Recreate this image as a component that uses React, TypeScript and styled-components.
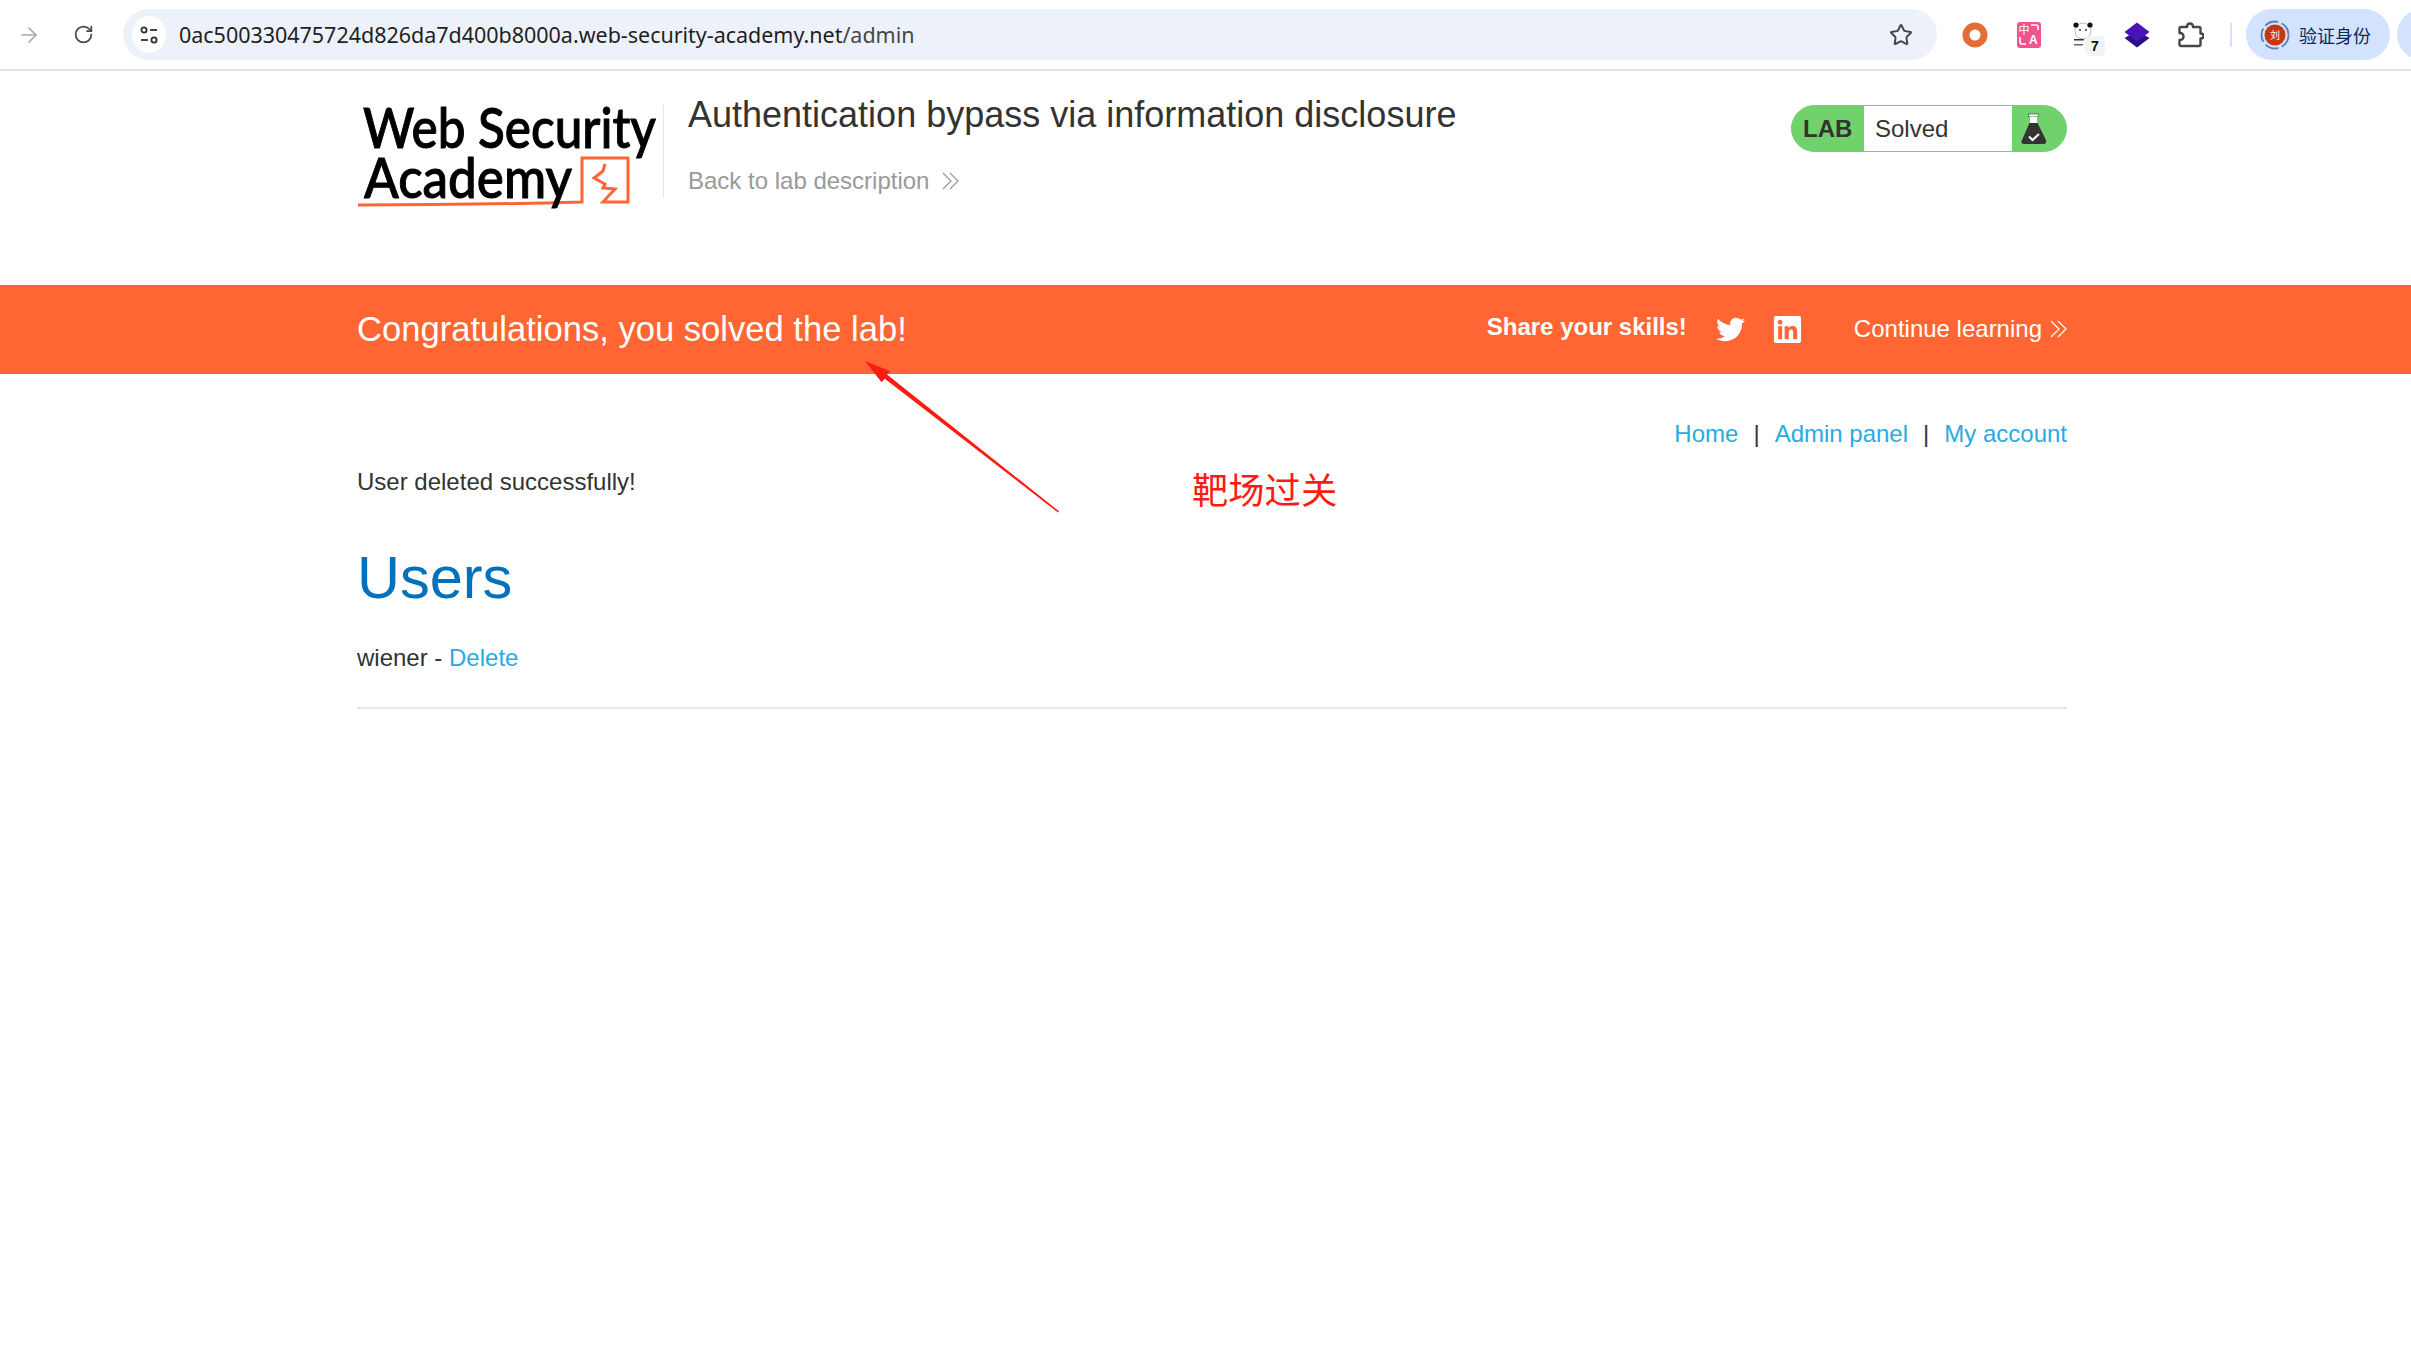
import React from "react";
import styled, { createGlobalStyle } from "styled-components";
import { ArrowRight, RotateCw, Star } from "lucide-react";
import { FaTwitter, FaLinkedin } from "react-icons/fa";

const Global = createGlobalStyle`
  html, body { margin: 0; padding: 0; background: #fff; }
  body { font-family: "Liberation Sans", Arial, sans-serif; color: #333332; }
  * { box-sizing: border-box; }
  a { text-decoration: none; }
`;

const Page = styled.div`
  position: relative;
  width: 2411px;
  height: 1368px;
  overflow: hidden;
  background: #fff;
`;

const BrowserBar = styled.div`
  height: 71px;
  border-bottom: 2px solid #e3e3e3;
  display: flex;
  align-items: flex-start;
  padding-top: 9px;
`;

const NavIcon = styled.div<{ $w: number; $c: string; $pad?: number }>`
  width: ${(p) => p.$w}px;
  height: 51px;
  padding-left: ${(p) => p.$pad ?? 0}px;
  display: flex;
  align-items: center;
  justify-content: center;
  color: ${(p) => p.$c};
  flex: none;
`;

const Omnibox = styled.div`
  width: 1814px;
  margin-left: 13px;
  height: 51px;
  background: #edf2fa;
  border-radius: 26px;
  display: flex;
  align-items: center;
  padding: 0 14px 0 9px;
  flex: none;
`;

const TuneBadge = styled.div`
  width: 34px;
  height: 37px;
  border-radius: 50%;
  background: #fff;
  display: flex;
  align-items: center;
  justify-content: center;
  flex: none;
`;

const Url = styled.div`
  margin-left: 13px;
  font-family: "Noto Sans", sans-serif;
  font-size: 21.5px;
  letter-spacing: -0.02px;
  color: #1f1f1f;
  white-space: nowrap;
  flex: 1;
  span { color: #474747; }
`;

const StarSlot = styled.div`
  width: 44px;
  height: 44px;
  display: flex;
  align-items: center;
  justify-content: center;
  color: #474747;
`;

const ExtRow = styled.div`
  display: flex;
  align-items: center;
  height: 51px;
  margin-left: 11px;
`;

const ExtSlot = styled.div`
  position: relative;
  width: 54px;
  height: 51px;
  display: flex;
  align-items: center;
  justify-content: center;
  flex: none;
`;

const ExtBadge = styled.div`
  position: absolute;
  left: 29px;
  top: 27px;
  width: 20px;
  height: 20px;
  border-radius: 5px;
  background: #f1f3f4;
  font: bold 14px "Liberation Sans", sans-serif;
  color: #111;
  display: flex;
  align-items: center;
  justify-content: center;
`;

const BarDivider = styled.div`
  width: 2px;
  height: 24px;
  background: #d3e3fd;
  margin: 0 14px 0 12px;
  flex: none;
`;

const ProfilePill = styled.div`
  width: 144px;
  height: 51px;
  border-radius: 26px;
  background: #d3e3fd;
  display: flex;
  align-items: center;
  padding-left: 14px;
  gap: 9px;
  flex: none;
`;

const ProfileName = styled.span`
  font-family: "Noto Sans CJK SC", sans-serif;
  font-size: 18px;
  color: #0a2a5c;
  white-space: nowrap;
`;

const NextPill = styled.div`
  width: 60px;
  height: 51px;
  margin-left: 7px;
  border-radius: 26px 0 0 26px;
  background: #d3e3fd;
  flex: none;
`;

const Shell = styled.div`
  width: 1710px;
  margin-left: 357px;
`;

const Header = styled(Shell)`
  height: 214px;
  display: flex;
  align-items: flex-start;
  padding-top: 20px;
`;

const LogoBox = styled.div`
  width: 307px;
  height: 93px;
  margin-top: 14px;
  border-right: 1px solid #e6e6e6;
  flex: none;
  svg { display: block; overflow: visible; }
`;

const TitleBlock = styled.div`
  margin-left: 24px;
`;

const LabTitle = styled.h2`
  margin: 2px 0 0;
  font-size: 36px;
  line-height: 44px;
  font-weight: 400;
  color: #333332;
`;

const BackLink = styled.a`
  margin-top: 29px;
  display: flex;
  align-items: center;
  gap: 13px;
  font-size: 24px;
  line-height: 30px;
  color: #999;
`;

const Status = styled.div`
  margin-left: auto;
  margin-top: 14px;
  width: 276px;
  height: 47px;
  border-radius: 24px;
  background: #70d16d;
  border: 1px solid #70d16d;
  display: flex;
  align-items: stretch;
  flex: none;
  overflow: hidden;
`;

const StatusLab = styled.div`
  width: 72px;
  padding-left: 11px;
  font-size: 24px;
  font-weight: 700;
  line-height: 45px;
  color: #333332;
`;

const StatusText = styled.div`
  width: 148px;
  background: #fff;
  padding-left: 11px;
  font-size: 24px;
  line-height: 45px;
  color: #333332;
`;

const StatusIcon = styled.div`
  flex: 1;
  display: flex;
  align-items: flex-start;
  padding: 7px 0 0 9px;
`;

const Banner = styled.div`
  height: 89px;
  background: #ff6633;
  color: #fff;
`;

const BannerInner = styled(Shell)`
  height: 100%;
  display: flex;
  align-items: center;
`;

const Congrats = styled.h4`
  margin: -1px 0 0;
  font-size: 34.6px;
  font-weight: 400;
  line-height: 40px;
  flex: 1;
`;

const Share = styled.span`
  font-size: 24px;
  font-weight: 700;
  margin-top: -5px;
  margin-right: 29px;
`;

const Social = styled.a<{ $gap: number }>`
  color: #fff;
  display: flex;
  margin-right: ${(p) => p.$gap}px;
`;

const Continue = styled.a`
  display: flex;
  align-items: center;
  gap: 8px;
  color: #fff;
  font-size: 24px;
  margin-top: -1px;
`;

const Content = styled(Shell)`
  padding-top: 45px;
`;

const TopLinks = styled.nav`
  display: flex;
  justify-content: flex-end;
  font-size: 24px;
  line-height: 30px;
`;

const NavLink = styled.a`
  color: #29abe2;
`;

const Pipe = styled.span`
  margin: 0 15px;
  color: #333332;
`;

const Body = styled.p<{ $mt: number }>`
  margin: ${(p) => p.$mt}px 0 0;
  font-size: 24px;
  line-height: 30px;
  color: #333332;
`;

const Heading = styled.h1`
  margin: 46px 0 0;
  font-size: 59.5px;
  line-height: 70px;
  font-weight: 400;
  color: #0071bc;
`;

const Rule = styled.hr`
  margin: 34px 0 0;
  border: 0;
  height: 2px;
  background: #e6e6e6;
`;

const ArrowMark = styled.svg`
  position: absolute;
  left: 860px;
  top: 355px;
`;

const Note = styled.div`
  position: absolute;
  left: 1192px;
  top: 465px;
  font-family: "Noto Sans CJK SC", sans-serif;
  font-size: 36.3px;
  line-height: 46px;
  color: #ff1a12;
  white-space: nowrap;
`;

const Chevrons = ({ c, w = 17, h = 18 }: { c: string; w?: number; h?: number }) => (
  <svg width={w} height={h} viewBox="0 0 17 18" fill="none" stroke={c} strokeWidth="1.2">
    <polyline points="1,1 9,9 1,17" />
    <polyline points="8,1 16,9 8,17" />
  </svg>
);

const Tune = () => (
  <svg width="20" height="22" viewBox="0 0 20 22" fill="none" stroke="#303030" strokeWidth="1.8">
    <circle cx="5" cy="6" r="2.6" />
    <line x1="11" y1="6" x2="18" y2="6" />
    <circle cx="15" cy="16" r="2.6" />
    <line x1="2" y1="16" x2="9" y2="16" />
  </svg>
);

const Translate = () => (
  <svg width="24" height="26" viewBox="0 0 24 26">
    <rect width="24" height="26" rx="3" fill="#ef5490" />
    <text x="1.5" y="12" fontSize="11" fill="#fff" fontFamily="Noto Sans CJK SC, sans-serif">中</text>
    <text x="12" y="22" fontSize="12" fontWeight="700" fill="#fff" fontFamily="Liberation Sans, sans-serif">A</text>
    <path d="M3 15v5a2 2 0 0 0 2 2h4M14 3h5a2 2 0 0 1 2 2v3" stroke="#fff" strokeWidth="1.6" fill="none" />
  </svg>
);

const Panda = () => (
  <svg width="24" height="26" viewBox="0 0 24 26">
    <circle cx="12" cy="9" r="8" fill="#fff" stroke="#777" strokeWidth="0.5" />
    <circle cx="5" cy="3" r="2.6" fill="#111" />
    <circle cx="19" cy="3" r="2.6" fill="#111" />
    <circle cx="9" cy="8" r="1.1" fill="#444" />
    <circle cx="15" cy="8" r="1.1" fill="#444" />
    <rect x="3" y="17" width="10" height="1.5" fill="#333" />
    <rect x="3" y="22" width="9" height="1.5" fill="#666" />
  </svg>
);

const Layers = () => (
  <svg width="26" height="26" viewBox="0 0 26 26">
    <path d="M0.5 16 L13 9 L25.5 16 L13 25.5 Z" fill="#2a0f86" />
    <path d="M0.5 10 L13 0.5 L25.5 10 L13 19.5 Z" fill="#4a12b5" />
  </svg>
);

const Puzzle = () => (
  <svg width="26" height="28" viewBox="0 0 26 28" fill="none" stroke="#474747" strokeWidth="2.4" strokeLinejoin="round">
    <path d="M3 6h6c0-2 1-3.500 3-3.500s3 1.500 3 3.500h6a1.500 1.500 0 0 1 1.500 1.500v5c2.200 0 3 1 3 2.500s-.8 2.500-3 2.500v6a1.500 1.500 0 0 1-1.500 1.500H3a1.500 1.500 0 0 1-1.500-1.500V19c2.500 0 4-1.500 4-3.500S4 12 1.500 12V7.500A1.500 1.500 0 0 1 3 6Z" />
  </svg>
);

const Avatar = () => (
  <svg width="30" height="30" viewBox="0 0 30 30">
    <circle cx="15" cy="15" r="13.500" fill="none" stroke="#5b7fb5" strokeWidth="1.800" strokeDasharray="14 3.500" />
    <circle cx="15" cy="15" r="10.500" fill="#c8380e" />
    <text x="15" y="19" textAnchor="middle" fontSize="10" fill="#fff" fontFamily="Noto Sans CJK SC, sans-serif">刘</text>
  </svg>
);

const Logo = () => (
  <svg width="306" height="110" viewBox="0 0 306 110">
    <path d="M1 100 C80 100 150 99 225 97 V53 H271 V97 H246 L258 84 L246 83 L248 79 L237 73 L246 66 L248 59" fill="none" stroke="#ff6633" strokeWidth="3" />
    <text x="6" y="43" fontFamily="Lato, sans-serif" fontWeight="500" fontSize="56" fill="#000" stroke="#000" strokeWidth="1" textLength="293" lengthAdjust="spacingAndGlyphs">Web Security</text>
    <text x="7" y="93" fontFamily="Lato, sans-serif" fontWeight="500" fontSize="56" fill="#000" stroke="#000" strokeWidth="1" textLength="208" lengthAdjust="spacingAndGlyphs">Academy</text>
  </svg>
);

const Flask = () => (
  <svg width="26" height="32" viewBox="0 0 26 32">
    <rect x="7.500" y="1" width="10" height="2.500" fill="#fff" stroke="#333332" strokeWidth="0.600" />
    <rect x="9" y="3.500" width="7" height="9" fill="#fff" />
    <path d="M8.500 10 H16.500 L25 27 Q26 31 22 31 H3 Q-1 31 1 27 Z" fill="#333332" />
    <path d="M8 23.500 L11.500 27 L18 21" fill="none" stroke="#fff" strokeWidth="2" />
  </svg>
);

export default function App() {
  return (
    <Page>
      <Global />
      <BrowserBar>
        <NavIcon $w={56} $c="#a9a9a9" $pad={2}>
          <ArrowRight size={24} strokeWidth={1.7} />
        </NavIcon>
        <NavIcon $w={54} $c="#474747">
          <RotateCw size={21} strokeWidth={2} />
        </NavIcon>
        <Omnibox>
          <TuneBadge>
            <Tune />
          </TuneBadge>
          <Url>
            0ac500330475724d826da7d400b8000a.web-security-academy.net<span>/admin</span>
          </Url>
          <StarSlot>
            <Star size={24} strokeWidth={2} />
          </StarSlot>
        </Omnibox>
        <ExtRow>
          <ExtSlot>
            <svg width="26" height="26" viewBox="0 0 26 26">
              <circle cx="13" cy="13" r="9" fill="none" stroke="#e36d35" strokeWidth="7" />
            </svg>
          </ExtSlot>
          <ExtSlot>
            <Translate />
          </ExtSlot>
          <ExtSlot>
            <Panda />
            <ExtBadge>7</ExtBadge>
          </ExtSlot>
          <ExtSlot>
            <Layers />
          </ExtSlot>
          <ExtSlot>
            <Puzzle />
          </ExtSlot>
          <BarDivider />
          <ProfilePill>
            <Avatar />
            <ProfileName>验证身份</ProfileName>
          </ProfilePill>
          <NextPill />
        </ExtRow>
      </BrowserBar>

      <Header>
        <LogoBox>
          <Logo />
        </LogoBox>
        <TitleBlock>
          <LabTitle>Authentication bypass via information disclosure</LabTitle>
          <BackLink href="#">
            Back to lab description
            <Chevrons c="#999" />
          </BackLink>
        </TitleBlock>
        <Status>
          <StatusLab>LAB</StatusLab>
          <StatusText>Solved</StatusText>
          <StatusIcon>
            <Flask />
          </StatusIcon>
        </Status>
      </Header>

      <Banner>
        <BannerInner>
          <Congrats>Congratulations, you solved the lab!</Congrats>
          <Share>Share your skills!</Share>
          <Social href="#" $gap={27}>
            <FaTwitter size={29} />
          </Social>
          <Social href="#" $gap={51}>
            <FaLinkedin size={31} />
          </Social>
          <Continue href="#">
            Continue learning
            <Chevrons c="#fff" />
          </Continue>
        </BannerInner>
      </Banner>

      <Content>
        <TopLinks>
          <NavLink href="#">Home</NavLink>
          <Pipe>|</Pipe>
          <NavLink href="#">Admin panel</NavLink>
          <Pipe>|</Pipe>
          <NavLink href="#">My account</NavLink>
        </TopLinks>
        <Body $mt={18}>User deleted successfully!</Body>
        <Heading>Users</Heading>
        <Body $mt={30}>
          wiener - <NavLink href="#">Delete</NavLink>
        </Body>
        <Rule />
      </Content>

      <ArrowMark width="200" height="160" viewBox="0 0 200 160">
        <polygon points="5,6 30.2,16.3 27,19.500 199,156.300 198,157.500 24.800,23.800 21.600,27.300" fill="#ff1a12" />
      </ArrowMark>
      <Note>靶场过关</Note>
    </Page>
  );
}
